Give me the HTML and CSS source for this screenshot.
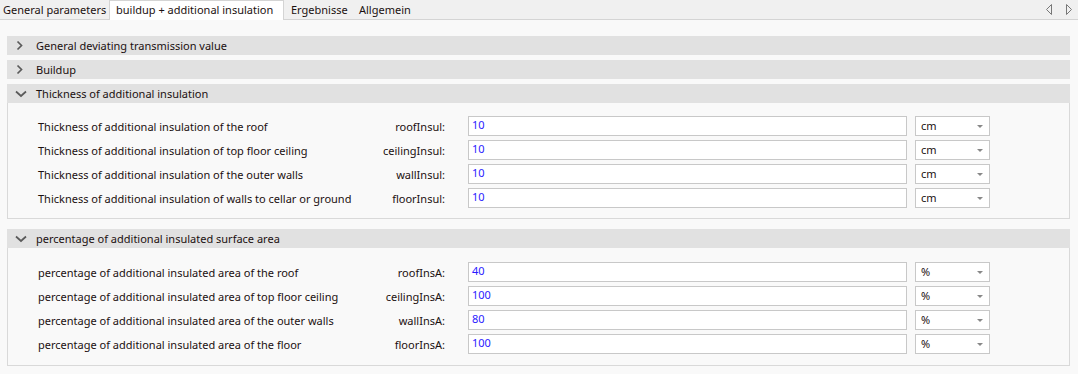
FILE: index.html
```html
<!DOCTYPE html>
<html>
<head>
<meta charset="utf-8">
<link rel="stylesheet" href="styles.css">
</head>
<body>
<div class="tabbar">
  <div class="tabs">
    <div class="tab t1">General parameters</div>
    <div class="tab active">buildup + additional insulation</div>
    <div class="tab t3">Ergebnisse</div>
    <div class="tab t4">Allgemein</div>
  </div>
  <div class="nav">
    <svg width="8" height="11" viewBox="0 0 8 11"><path d="M6.5 0.5 L1.5 5.5 L6.5 10.5 Z" fill="none" stroke="#777" stroke-width="1"/></svg>
    <svg width="8" height="11" viewBox="0 0 8 11"><path d="M1.5 0.5 L6.5 5.5 L1.5 10.5 Z" fill="none" stroke="#777" stroke-width="1"/></svg>
  </div>
</div>
<div class="content">
  <div class="section">
    <div class="header"><svg class="chev" width="10" height="11" viewBox="0 0 10 11"><path d="M2.5 1.5 L6.5 5.5 L2.5 9.5" fill="none" stroke="#5a5a5a" stroke-width="1.7"/></svg><span>General deviating transmission value</span></div>
  </div>
  <div class="section">
    <div class="header"><svg class="chev" width="10" height="11" viewBox="0 0 10 11"><path d="M2.5 1.5 L6.5 5.5 L2.5 9.5" fill="none" stroke="#5a5a5a" stroke-width="1.7"/></svg><span>Buildup</span></div>
  </div>
  <div class="section open">
    <div class="header"><svg class="chev down" width="12" height="10" viewBox="0 0 12 10"><path d="M1 2.5 L6 7 L11 2.5" fill="none" stroke="#5a5a5a" stroke-width="1.7"/></svg><span>Thickness of additional insulation</span></div>
    <div class="body">
      <div class="row"><span class="lbl">Thickness of additional insulation of the roof</span><span class="key">roofInsul:</span><div class="input">10</div><div class="select"><span>cm</span><i class="arrow"></i></div></div>
      <div class="row"><span class="lbl">Thickness of additional insulation of top floor ceiling</span><span class="key">ceilingInsul:</span><div class="input">10</div><div class="select"><span>cm</span><i class="arrow"></i></div></div>
      <div class="row"><span class="lbl">Thickness of additional insulation of the outer walls</span><span class="key">wallInsul:</span><div class="input">10</div><div class="select"><span>cm</span><i class="arrow"></i></div></div>
      <div class="row"><span class="lbl">Thickness of additional insulation of walls to cellar or ground</span><span class="key">floorInsul:</span><div class="input">10</div><div class="select"><span>cm</span><i class="arrow"></i></div></div>
    </div>
  </div>
  <div class="section open second">
    <div class="header"><svg class="chev down" width="12" height="10" viewBox="0 0 12 10"><path d="M1 2.5 L6 7 L11 2.5" fill="none" stroke="#5a5a5a" stroke-width="1.7"/></svg><span>percentage of additional insulated surface area</span></div>
    <div class="body">
      <div class="row"><span class="lbl">percentage of additional insulated area of the roof</span><span class="key">roofInsA:</span><div class="input">40</div><div class="select"><span>%</span><i class="arrow"></i></div></div>
      <div class="row"><span class="lbl">percentage of additional insulated area of top floor ceiling</span><span class="key">ceilingInsA:</span><div class="input">100</div><div class="select"><span>%</span><i class="arrow"></i></div></div>
      <div class="row"><span class="lbl">percentage of additional insulated area of the outer walls</span><span class="key">wallInsA:</span><div class="input">80</div><div class="select"><span>%</span><i class="arrow"></i></div></div>
      <div class="row"><span class="lbl">percentage of additional insulated area of the floor</span><span class="key">floorInsA:</span><div class="input">100</div><div class="select"><span>%</span><i class="arrow"></i></div></div>
    </div>
  </div>
</div>
</body>
</html>
```
FILE: styles.css
```css
* { box-sizing: border-box; }
html, body { margin: 0; padding: 0; }
body {
  width: 1078px;
  height: 374px;
  overflow: hidden;
  background: #f9f9f9;
  font-family: "Noto Sans", "Open Sans", sans-serif;
  font-size: 11px;
  color: #1b1010;
}
.tabbar {
  height: 20px;
  background: #f0f0f0;
  border-bottom: 1px solid #d4d4d4;
  display: flex;
  justify-content: space-between;
  align-items: flex-start;
}
.tabs { display: flex; height: 20px; }
.tab {
  height: 19px;
  line-height: 17px;
  border: 1px solid transparent;
  border-bottom: none;
  white-space: nowrap;
}
.t1 { width: 107px; padding-left: 2px; }
.tab.active {
  background: #ffffff;
  border-color: #d4d4d4;
  height: 20px;
  width: 175px;
  margin-left: 2px;
  padding-left: 6px;
}
.t3 { width: 70px; padding-left: 6px; }
.t4 { padding-left: 4px; }
.nav {
  display: flex;
  gap: 12px;
  padding: 4px 5px 0 0;
}
.content {
  padding: 16px 8px 0 7px;
}
.section { margin-bottom: 5px; }
.section.open { margin-bottom: 10px; }
.header {
  height: 19px;
  background: #e1e1e1;
  display: flex;
  align-items: center;
  padding-left: 8px;
  line-height: 19px;
}
.chev { margin-right: 11px; flex: none; }
.chev.down { margin-right: 9px; }
.body {
  border: 1px solid #d9d9d9;
  border-top: none;
  padding: 13px 0 10px 30px;
  display: flex;
  flex-direction: column;
  gap: 4px;
}
.second .body { padding: 14px 0 11px 30px; }
.row {
  display: grid;
  grid-template-columns: 300px 107px 439px 75px;
  align-items: center;
  height: 20px;
}
.lbl { white-space: nowrap; }
.key { text-align: right; white-space: nowrap; }
.input {
  margin-left: 23px;
  width: 439px;
  height: 20px;
  background: #ffffff;
  border: 1px solid #c8c8c8;
  color: #2a1aff;
  padding-left: 3px;
  line-height: 16px;
}
.select {
  margin-left: 31px;
  width: 75px;
  height: 20px;
  background: #ffffff;
  border: 1px solid #c8c8c8;
  display: flex;
  align-items: center;
  justify-content: space-between;
  padding: 0 6px 0 5px;
  line-height: 18px;
}
.arrow {
  width: 0;
  height: 0;
  border-left: 3px solid transparent;
  border-right: 3px solid transparent;
  border-top: 3px solid #888;
}
```
